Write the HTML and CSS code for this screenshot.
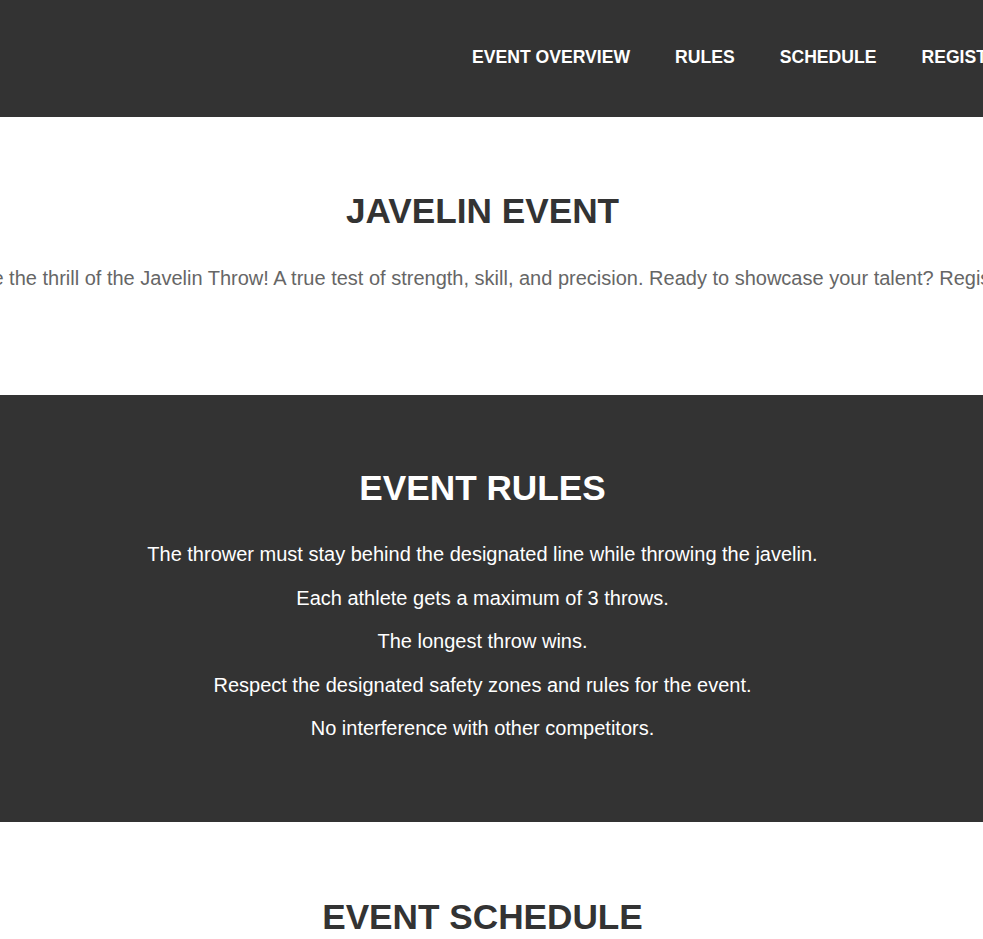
FILE: index.html
```html
<!DOCTYPE html>
<html lang="en">
<head>
<meta charset="utf-8">
<title>Javelin Event</title>
<link rel="stylesheet" href="styles.css">
</head>
<body>
<header class="site-header">
  <div class="logo"></div>
  <nav class="main-nav">
    <ul>
      <li><a href="#overview">EVENT OVERVIEW</a></li>
      <li><a href="#rules">RULES</a></li>
      <li><a href="#schedule">SCHEDULE</a></li>
      <li><a href="#register">REGISTER</a></li>
      <li><a href="#contact">CONTACT</a></li>
    </ul>
  </nav>
</header>
<main>
  <section class="hero" id="overview">
    <h2 class="section-title">JAVELIN EVENT</h2>
    <p class="hero-text">Experience the thrill of the Javelin Throw! A true test of strength, skill, and precision. Ready to showcase your talent? Register now!</p>
  </section>
  <section class="rules" id="rules">
    <h2 class="section-title">EVENT RULES</h2>
    <ul class="rules-list">
      <li>The thrower must stay behind the designated line while throwing the javelin.</li>
      <li>Each athlete gets a maximum of 3 throws.</li>
      <li>The longest throw wins.</li>
      <li>Respect the designated safety zones and rules for the event.</li>
      <li>No interference with other competitors.</li>
    </ul>
  </section>
  <section class="schedule" id="schedule">
    <h2 class="section-title">EVENT SCHEDULE</h2>
  </section>
</main>
</body>
</html>
```
FILE: styles.css
```css
* { box-sizing: border-box; }
html, body { margin: 0; padding: 0; overflow: hidden; }
body {
  font-family: "Liberation Sans", Arial, sans-serif;
  color: #333;
  background: #fff;
}
.site-header {
  background: #333;
  height: 117px;
  display: flex;
  align-items: center;
  padding-left: 20px;
}
.logo { flex: 0 0 437px; }
.main-nav { flex-shrink: 0; margin-top: -3px; }
.main-nav ul {
  list-style: none;
  margin: 0;
  padding: 0;
  display: flex;
  gap: 15px;
  white-space: nowrap;
}
.main-nav a {
  display: block;
  padding: 10px 15px;
  color: #fff;
  text-decoration: none;
  font-weight: bold;
  font-size: 17.6px;
}
main { padding-right: 18px; }
.section-title {
  margin: 0;
  font-size: 35.2px;
  font-weight: bold;
  line-height: 40px;
}
.hero {
  height: 278px;
  padding-top: 74px;
  display: flex;
  flex-direction: column;
  align-items: center;
  text-align: center;
}
.hero-text {
  margin: 36px 0 0;
  white-space: nowrap;
  font-size: 20px;
  line-height: 23px;
  color: #666;
}
.rules {
  background: #333;
  color: #fff;
  margin-right: -18px;
  padding: 73px 18px 71px 0;
  text-align: center;
}
.rules-list {
  list-style: none;
  margin: 25px 0 0;
  padding: 0;
  font-size: 20px;
  line-height: 23.5px;
}
.rules-list li { padding: 10px 0; }
.schedule {
  padding-top: 75px;
  text-align: center;
  height: 200px;
}
```
